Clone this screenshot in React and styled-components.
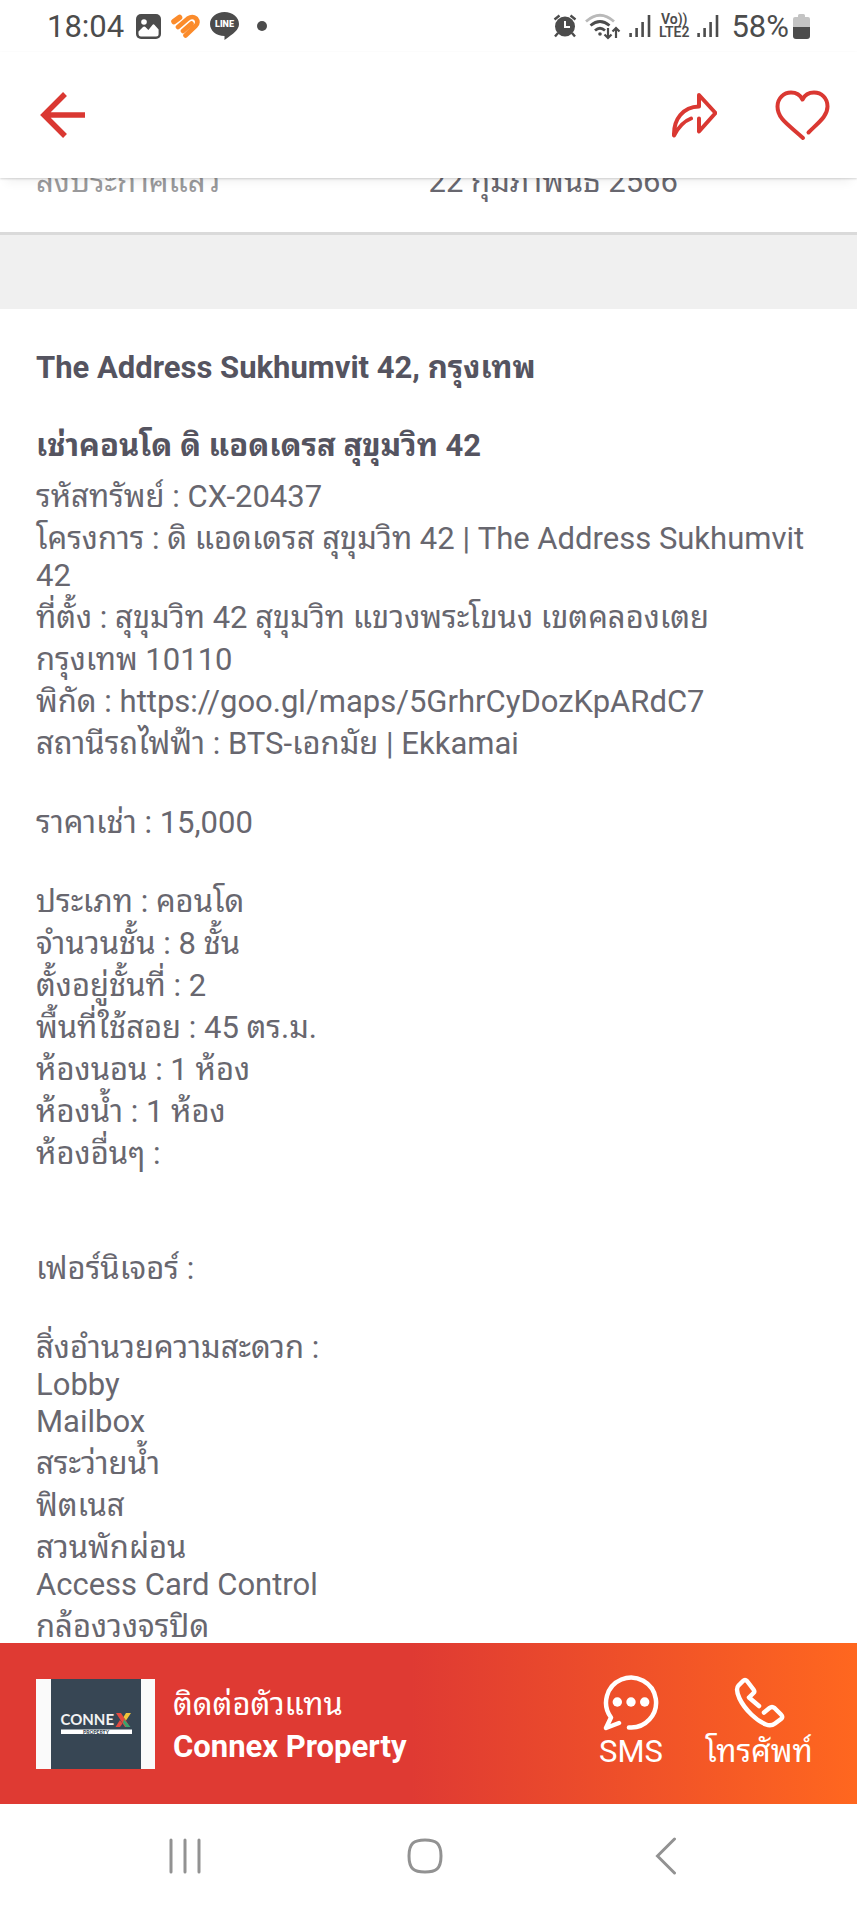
import React from "react";
import styled, { createGlobalStyle, css } from "styled-components";

const Global = createGlobalStyle`
  *, *::before, *::after { box-sizing: border-box; }
  html, body { margin: 0; padding: 0; background: #fff; }
  body { font-family: Roboto, "Noto Sans Thai Looped", "Noto Looped Thai", Loma, Garuda, Waree, Umpush, "Noto Sans Thai", "Noto Sans", sans-serif; font-size: 31px; line-height: 37px; color: #68676f; }
  button { font: inherit; color: inherit; background: none; border: 0; padding: 0; cursor: pointer; }
  svg { display: block; flex: none; }
`;

const Screen = styled.div`
  display: flex;
  flex-direction: column;
  height: 100vh;
  overflow: hidden;
`;

const StatusBar = styled.div`
  flex: none;
  display: flex;
  align-items: center;
  justify-content: space-between;
  height: 52px;
  padding: 0 47px;
  color: #4c4c4c;
`;

const StatusGroup = styled.div`
  display: flex;
  align-items: center;
  gap: ${(p) => p.$gap}px;
`;

const Clock = styled.time`
  margin-right: 2px;
`;

const Dot = styled.span`
  width: 10px;
  height: 10px;
  margin-left: 8px;
  border-radius: 50%;
  background: #4c4c4c;
`;

const NetworkTag = styled.span`
  display: flex;
  flex-direction: column;
  align-items: center;
  font-size: 14px;
  line-height: 13px;
  font-weight: 600;
`;

const Charge = styled.span`
  display: flex;
  align-items: center;
  gap: 4px;
  margin-left: 4px;
`;

const Toolbar = styled.header`
  position: relative;
  z-index: 1;
  flex: none;
  display: flex;
  align-items: center;
  height: 126px;
  padding: 0 27px 0 40px;
  color: #da3832;
  background: #fff;
  box-shadow: 0 1px 2px rgba(0, 0, 0, 0.16), 0 10px 10px -6px rgba(0, 0, 0, 0.06);
`;

const ToolbarActions = styled.div`
  display: flex;
  align-items: center;
  gap: 58px;
  margin-left: auto;
`;

const Scroller = styled.main`
  flex: 1;
  min-height: 0;
  overflow-y: auto;
  scrollbar-width: none;
`;

const FactRow = styled.div`
  display: grid;
  grid-template-columns: 1fr 1fr;
  align-content: end;
  height: 57px;
  padding: 0 36px 32px;
  overflow: hidden;
  border-bottom: 3px solid #dadada;
`;

const FactLabel = styled.span`
  color: #99999b;
`;

const Divider = styled.div`
  height: 74px;
  background: #f0f0f0;
`;

const Details = styled.article`
  padding: 35px 36px 0;
`;

const thai = css`
  padding-top: 5px;
`;

const Title = styled.h1`
  margin: 0 0 36px;
  ${thai}
  font-size: 31px;
  line-height: 37px;
  font-weight: 700;
  color: #555460;
`;

const Subtitle = styled(Title).attrs({ as: "h2" })`
  margin: 0 0 9px;
`;

const Block = styled.section`
  margin-bottom: ${(p) => (p.$wide ? 73 : 37)}px;
`;

const Line = styled.p`
  margin: 0;
  ${(p) => p.$thai && thai}
`;

const MapLink = styled.a`
  color: inherit;
  text-decoration: none;
`;

const ContactBar = styled.section`
  flex: none;
  display: flex;
  align-items: center;
  justify-content: space-between;
  height: 161px;
  padding: 0 38px 0 36px;
  color: #fff;
  background: linear-gradient(90deg, #df3a33 0%, #df3a33 48%, #ff671f 100%);
`;

const Agent = styled.div`
  display: flex;
  align-items: center;
  gap: 18px;
`;

const AgentLogo = styled.div`
  display: flex;
  justify-content: center;
  width: 119px;
  height: 90px;
  background: #fafafa;
`;

const AgentText = styled.div`
  display: flex;
  flex-direction: column;
  gap: 5px;
  padding-top: 4px;
`;

const ContactActions = styled.div`
  display: flex;
  gap: 36px;
`;

const ContactButton = styled.button`
  display: flex;
  flex-direction: column;
  align-items: center;
  gap: 1px;
  min-width: ${(p) => (p.$wide ? 120 : 64)}px;
  height: 99px;
`;

const SystemNav = styled.nav`
  flex: none;
  display: flex;
  height: 107px;
  padding: 0 71px 3px 65px;
  color: #929292;
`;

const NavButton = styled.button`
  flex: 1;
  display: flex;
  align-items: center;
  justify-content: center;
`;

const Signal = () => (
  <svg width="22" height="24" viewBox="0 0 22 24" fill="none" stroke="currentColor" strokeWidth="2.6">
    <path d="M1.6 19v4M7.6 14v9M13.6 8v15M20 1v22" />
  </svg>
);

const ImageIcon = () => (
  <svg width="25" height="25" viewBox="0 0 25 25">
    <rect width="25" height="25" rx="5" fill="currentColor" />
    <circle cx="8" cy="8" r="2.8" fill="#fff" />
    <path d="M2.500 17.500 7 13q1.200-1 2.400 0l3 3 4-5q1.100-1.300 2.200 0l4 4.500V20q0 2.500-2.500 2.500H5q-2.500 0-2.500-3z" fill="#fff" />
  </svg>
);

const StripedHeart = () => (
  <svg width="29" height="24" viewBox="0 0 29 24" fill="none" stroke="#fb8b2b" strokeWidth="4.600" strokeLinecap="round" strokeLinejoin="round">
    <path d="M3 7.500 8.500 3.500" strokeWidth="5.600" />
    <path d="M7 13 17 4.500Q21.500 1.500 25 4.500 28 8.500 24.500 12L14.500 21.500M12 17l8.500-7.500" />
  </svg>
);

const LineIcon = () => (
  <svg width="29" height="28" viewBox="0 0 29 28">
    <path d="M14.500 0C22.500 0 29 5.200 29 12c0 6-5.500 9.500-14.500 16v-4C6 24 0 18.500 0 12 0 5.200 6.500 0 14.500 0z" fill="currentColor" />
    <text x="14.500" y="15" textAnchor="middle" fontFamily="Roboto, sans-serif" fontSize="9" fontWeight="900" fill="#fff">LINE</text>
  </svg>
);

const AlarmIcon = () => (
  <svg width="24" height="24" viewBox="0 0 24 24" fill="none" stroke="currentColor" strokeWidth="2.400">
    <circle cx="12" cy="12.500" r="10" fill="currentColor" stroke="none" />
    <path d="M1.500 5.500 6.500 1.500M22.500 5.500 17.500 1.500M5 19l-3 3.500M19 19l3 3.500" />
    <path d="M12 7v6h5" stroke="#fff" strokeWidth="2" />
  </svg>
);

const WifiIcon = () => (
  <svg width="36" height="27" viewBox="0 0 36 27" fill="none" stroke="currentColor" strokeWidth="2.800">
    <path d="M1 8.500Q15 -4 29 8.500" stroke="#b9b9b9" />
    <path d="M5.500 12.500Q15 4.500 24.500 12.500M10 17.500q5-4.500 10 0" />
    <circle cx="15" cy="21" r="1.800" fill="currentColor" stroke="none" />
    <path d="M23 15v10M19.500 21.500 23 25l3.500-3.500M31 25V15M27.500 18.500 31 15l3.500 3.500" strokeWidth="2.200" />
  </svg>
);

const BatteryIcon = () => (
  <svg width="17" height="25" viewBox="0 0 17 25">
    <path d="M0 13V5q0-2 2-2h3V1.500Q5 0 6.500 0h4Q12 0 12 1.500V3h3q2 0 2 2v8z" fill="#c4c4c4" />
    <path d="M0 13h17v9q0 3-3 3H3q-3 0-3-3z" fill="currentColor" />
  </svg>
);

const BackArrow = () => (
  <svg width="46" height="46" viewBox="0 0 46 46" fill="none" stroke="currentColor" strokeWidth="5.500">
    <path d="M25 2 4 23l21 21M4 23h41" />
  </svg>
);

const ShareIcon = () => (
  <svg width="47" height="46" viewBox="0 0 47 46" fill="none" stroke="currentColor" strokeWidth="4" strokeLinecap="round" strokeLinejoin="round">
    <path d="M21 26.500C13 29.500 8 36 4 43.500 3.500 27 13 15 29 14.500V3l16.500 18L29 39.500V26.500" />
  </svg>
);

const HeartIcon = () => (
  <svg width="55" height="52" viewBox="0 0 55 52" fill="none" stroke="currentColor" strokeWidth="4" strokeLinecap="round" strokeLinejoin="round">
    <path d="M28 49C14 36 2.500 30 2.500 17.500 2.500 9 9 3.500 16 3.500c6 0 9.500 3 11.500 7 2-4 6-7 11.500-7 7.500 0 13.500 5.500 13.500 14C52.500 27 44 33 33.500 43.500" />
  </svg>
);

const SmsIcon = () => (
  <svg width="58" height="58" viewBox="0 0 58 58" fill="none" stroke="currentColor" strokeWidth="4.500" strokeLinecap="round" strokeLinejoin="round">
    <path d="M17 49 4 54l5-10.500A25 25 0 1 1 27 53.500" />
    <g fill="currentColor" stroke="none">
      <circle cx="15.300" cy="28" r="4.700" />
      <circle cx="29" cy="28" r="4.700" />
      <circle cx="42.700" cy="28" r="4.700" />
    </g>
  </svg>
);

const PhoneIcon = () => (
  <svg width="53" height="58" viewBox="0 -2 53 58" fill="none" stroke="currentColor" strokeWidth="4.500" strokeLinecap="round" strokeLinejoin="round">
    <path d="M26 30 16 21.500l4.500-4.500q1.500-1.500 0-3.500L14 5q-2-2-4 0L5.500 9.500C3 12 4 17 6.500 22.500 12 34 24 45 33 48.500q5 2 9-1l6-4.500q2.500-2 0-4.500L41.500 32q-2.500-2-5 0L31 36.500" />
  </svg>
);

const ConnexLogo = () => (
  <svg width="90" height="90" viewBox="0 0 90 90" role="img" aria-label="Connex Property">
    <rect width="90" height="90" fill="#374654" />
    <text x="9.500" y="46" fontFamily="Lato, sans-serif" fontSize="15" fontWeight="700" fill="#f2f2f2">CONNE</text>
    <path d="M65 34h5l9 14h-5z" fill="#e5493f" />
    <path d="M75 34h5l-5 7.500-2.500-3.500z" fill="#f0c33c" />
    <path d="M73 40.500 79.500 48H75l-3-4.500z" fill="#35a56f" />
    <path d="M64.500 48 69 41l2.500 3.500L69 48z" fill="#e5493f" />
    <rect x="10" y="50.500" width="71" height="4.500" fill="#fff" />
    <text x="45" y="54.500" textAnchor="middle" fontFamily="Lato, sans-serif" fontSize="5" fontWeight="900" fill="#374654">PROPERTY</text>
  </svg>
);

const RecentsIcon = () => (
  <svg width="34" height="36" viewBox="0 0 34 36" fill="none" stroke="currentColor" strokeWidth="3" strokeLinecap="round">
    <path d="M3 2v32M17 2v32M31 2v32" />
  </svg>
);

const HomeIcon = () => (
  <svg width="36" height="36" viewBox="0 0 36 36" fill="none" stroke="currentColor" strokeWidth="3">
    <path d="M18 2C29 2 34 5 34 18S29 34 18 34 2 31 2 18 7 2 18 2z" />
  </svg>
);

const NavBackIcon = () => (
  <svg width="22" height="38" viewBox="0 0 22 38" fill="none" stroke="currentColor" strokeWidth="3" strokeLinecap="round">
    <path d="M19.500 2 2.500 19l17 17" />
  </svg>
);

const blocks = [
  {
    lines: [
      "รหัสทรัพย์ : CX-20437",
      "โครงการ : ดิ แอดเดรส สุขุมวิท 42 | The Address Sukhumvit 42",
      "ที่ตั้ง : สุขุมวิท 42 สุขุมวิท แขวงพระโขนง เขตคลองเตย",
      "กรุงเทพ 10110",
      "พิกัด : https://goo.gl/maps/5GrhrCyDozKpARdC7",
      "สถานีรถไฟฟ้า : BTS-เอกมัย | Ekkamai",
    ],
  },
  { lines: ["ราคาเช่า : 15,000"] },
  {
    wide: true,
    lines: [
      "ประเภท : คอนโด",
      "จำนวนชั้น : 8 ชั้น",
      "ตั้งอยู่ชั้นที่ : 2",
      "พื้นที่ใช้สอย : 45 ตร.ม.",
      "ห้องนอน : 1 ห้อง",
      "ห้องน้ำ : 1 ห้อง",
      "ห้องอื่นๆ :",
    ],
  },
  { lines: ["เฟอร์นิเจอร์ :"] },
  {
    lines: [
      "สิ่งอำนวยความสะดวก :",
      "Lobby",
      "Mailbox",
      "สระว่ายน้ำ",
      "ฟิตเนส",
      "สวนพักผ่อน",
      "Access Card Control",
      "กล้องวงจรปิด",
    ],
  },
];

const hasThai = (text) => /[\u0E00-\u0E7F]/.test(text);

const withLinks = (text) =>
  text.split(/(https:\S+)/).map((part, i) =>
    part.startsWith("https:") ? (
      <MapLink key={i} href={part}>
        {part}
      </MapLink>
    ) : (
      part
    )
  );

export default function App() {
  return (
    <Screen>
      <Global />
      <StatusBar>
        <StatusGroup $gap={10}>
          <Clock>18:04</Clock>
          <ImageIcon />
          <StripedHeart />
          <LineIcon />
          <Dot />
        </StatusGroup>
        <StatusGroup $gap={8}>
          <AlarmIcon />
          <WifiIcon />
          <Signal />
          <NetworkTag>
            <span>Vo))</span>
            <span>LTE2</span>
          </NetworkTag>
          <Signal />
          <Charge>
            <span>58%</span>
            <BatteryIcon />
          </Charge>
        </StatusGroup>
      </StatusBar>
      <Toolbar>
        <button type="button" aria-label="Back">
          <BackArrow />
        </button>
        <ToolbarActions>
          <button type="button" aria-label="Share">
            <ShareIcon />
          </button>
          <button type="button" aria-label="Save">
            <HeartIcon />
          </button>
        </ToolbarActions>
      </Toolbar>
      <Scroller>
        <FactRow>
          <FactLabel>ลงประกาศแล้ว</FactLabel>
          <span>22 กุมภาพันธ์ 2566</span>
        </FactRow>
        <Divider />
        <Details>
          <Title>The Address Sukhumvit 42, กรุงเทพ</Title>
          <Subtitle>เช่าคอนโด ดิ แอดเดรส สุขุมวิท 42</Subtitle>
          {blocks.map((block, i) => (
            <Block key={i} $wide={block.wide}>
              {block.lines.map((text) => (
                <Line key={text} $thai={hasThai(text)}>
                  {withLinks(text)}
                </Line>
              ))}
            </Block>
          ))}
        </Details>
      </Scroller>
      <ContactBar>
        <Agent>
          <AgentLogo>
            <ConnexLogo />
          </AgentLogo>
          <AgentText>
            <span>ติดต่อตัวแทน</span>
            <strong>Connex Property</strong>
          </AgentText>
        </Agent>
        <ContactActions>
          <ContactButton type="button">
            <SmsIcon />
            SMS
          </ContactButton>
          <ContactButton type="button" $wide>
            <PhoneIcon />
            โทรศัพท์
          </ContactButton>
        </ContactActions>
      </ContactBar>
      <SystemNav>
        <NavButton type="button" aria-label="Recent apps">
          <RecentsIcon />
        </NavButton>
        <NavButton type="button" aria-label="Home">
          <HomeIcon />
        </NavButton>
        <NavButton type="button" aria-label="Go back">
          <NavBackIcon />
        </NavButton>
      </SystemNav>
    </Screen>
  );
}
